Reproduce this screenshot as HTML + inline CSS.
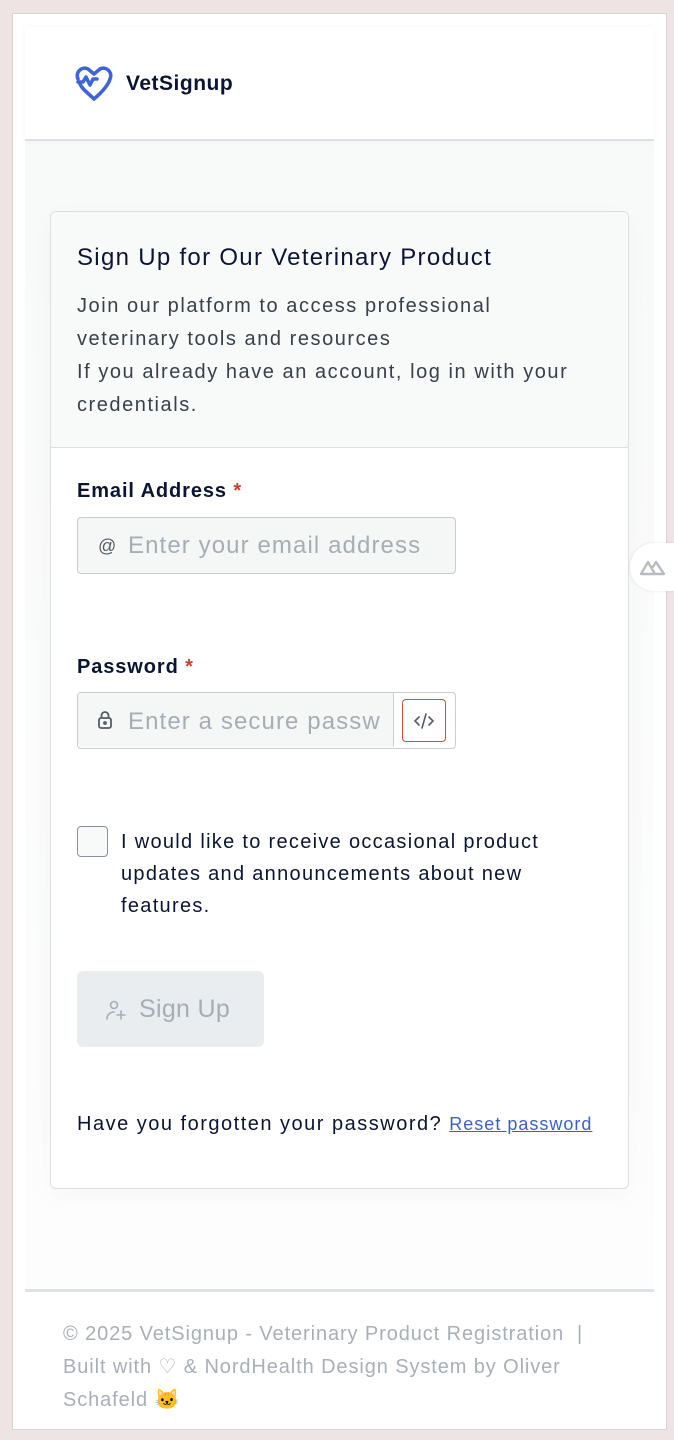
<!DOCTYPE html>
<html><head><meta charset="utf-8"><style>
*{box-sizing:border-box;margin:0;padding:0}
body{width:674px;height:1440px;background:#ede4e3;font-family:"Liberation Sans",sans-serif;position:relative;overflow:hidden;color:#0b1533}
.a{position:absolute}
.frame{left:12px;top:13px;width:655px;height:1417px;background:#fff;border:1px solid #d4d4d8}
.main{left:25px;top:140px;width:629px;height:1150px;background:linear-gradient(#f8f9f9,#fdfdfd)}
.header{left:25px;top:27px;width:629px;height:114px;background:#fff;border-bottom:2px solid #dcdfe3;box-shadow:0 0 6px rgba(0,0,0,.04)}
.card{left:50px;top:211px;width:579px;height:978px;background:#fff;border:1px solid #dcdfe3;border-radius:6px;box-shadow:0 6px 24px rgba(0,0,0,.03)}
.chead{left:0;top:0;width:577px;height:236px;background:#f8f9f9;border-bottom:1px solid #dcdfe3;border-radius:6px 6px 0 0}
.t{white-space:nowrap}
.inp{background:#f5f7f7;border:1.5px solid #c8cdd2;border-radius:4px}
.ph{color:#a6adb4;font-size:24px;letter-spacing:1.1px}
.foot{left:25px;top:1289px;width:629px;height:140px;background:#fff;border-top:3px solid #dde2e7}
.ft{color:#a9afb6;font-size:20px;line-height:33px;left:63px;letter-spacing:0.9px}
</style></head><body>
<div class="a frame"></div>
<div class="a main"></div>
<div class="a header"></div>
<svg class="a" style="left:74px;top:66px" width="40" height="37" viewBox="0 0 40 37" fill="none" stroke="#3f63d8" stroke-width="3.6" stroke-linejoin="round" stroke-linecap="round">
<path d="M4 13C1 6 8 0 14 3l6 5 6-5c6-3 13 3 10 10-2 7-9 14-16 20C14 27 8 23 6 18"/>
<path d="M4 16h5l3-5 4 8 3-6h4"/>
</svg>
<div class="a t" style="left:126px;top:72px;font-size:21px;font-weight:bold;color:#0b1533;letter-spacing:0.5px">VetSignup</div>

<div class="a card">
<div class="a chead"></div>
<div class="a t" style="left:26px;top:32px;font-size:24px;color:#0b1533;letter-spacing:1.3px">Sign Up for Our Veterinary Product</div>
<div class="a t" style="left:26px;top:78px;font-size:20px;line-height:33px;color:#39404a;letter-spacing:1.55px">Join our platform to access professional<br>veterinary tools and resources<br>If you already have an account, log in with your<br>credentials.</div>
<div class="a t" style="left:26px;top:268px;font-size:20px;font-weight:bold;letter-spacing:0.9px">Email Address <span style="color:#c8412a">*</span></div>
<div class="a inp" style="left:26px;top:305px;width:379px;height:57px"></div>
<div class="a t" style="left:47px;top:324px;font-size:18px;color:#555c66">@</div>
<div class="a t ph" style="left:77px;top:320px">Enter your email address</div>
<div class="a t" style="left:26px;top:444px;font-size:20px;font-weight:bold;letter-spacing:0.9px">Password <span style="color:#c8412a">*</span></div>
<div class="a inp" style="left:26px;top:480px;width:379px;height:57px;background:#fff"></div>
<div class="a" style="left:27px;top:481px;width:316px;height:54px;background:#f5f7f7;border-right:1.5px solid #c8cdd2;border-radius:3px 0 0 3px"></div>
<svg class="a" style="left:46px;top:498px" width="16" height="20" viewBox="0 0 16 20" fill="none" stroke="#555c66" stroke-width="1.8"><rect x="2" y="8" width="12" height="10" rx="2"/><path d="M4.5 8V5.5a3.5 3.5 0 0 1 7 0V8"/><circle cx="8" cy="13" r="1" fill="#555c66"/></svg>
<div class="a t ph" style="left:77px;top:496px;width:254px;overflow:hidden">Enter a secure passw</div>
<div class="a" style="left:351px;top:487px;width:44px;height:43px;border:1.5px solid #c8553f;border-radius:4px"></div>
<svg class="a" style="left:362px;top:499px" width="22" height="20" viewBox="0 0 22 20" fill="none" stroke="#555c66" stroke-width="1.6" stroke-linecap="round"><path d="M6 6l-4 4 4 4M16 6l4 4-4 4M13 3L9 17"/></svg>
<div class="a" style="left:26px;top:614px;width:31px;height:31px;border:1.5px solid #8a9199;border-radius:4px;background:#f8f9f9"></div>
<div class="a t" style="left:70px;top:614px;font-size:20px;line-height:32px;color:#0b1533;letter-spacing:1.3px">I would like to receive occasional product<br>updates and announcements about new<br>features.</div>
<div class="a" style="left:26px;top:759px;width:187px;height:76px;background:#e9edf0;border-radius:6px"></div>
<svg class="a" style="left:55px;top:787px" width="22" height="22" viewBox="0 0 22 22" fill="none" stroke="#a6adb4" stroke-width="1.6" stroke-linecap="round"><circle cx="8" cy="6" r="3.5"/><path d="M1 20c0-4 3-7 7-7M15 12v8M11 16h8"/></svg>
<div class="a t" style="left:88px;top:783px;font-size:25px;color:#a6adb4;letter-spacing:0.3px">Sign Up</div>
<div class="a t" style="left:26px;top:901px;font-size:20px;color:#0b1533;letter-spacing:1.5px">Have you forgotten your password? <span style="color:#3f5fc8;text-decoration:underline;font-size:18px;letter-spacing:1px">Reset password</span></div>
</div>

<div class="a" style="left:630px;top:543px;width:44px;height:48px;background:#fff;border-radius:24px 0 0 24px;box-shadow:0 0 3px rgba(0,0,0,.1)"></div>
<svg class="a" style="left:639px;top:558px" width="28" height="18" viewBox="0 0 28 18" fill="none" stroke="#b8bcc0" stroke-width="2.4" stroke-linejoin="round"><path d="M2 16L9 4l7 12zM13 10l4-6 8 12h-9"/></svg>

<div class="a foot"></div>
<div class="a ft t" style="top:1318px">© 2025 VetSignup - Veterinary Product Registration &nbsp;|</div>
<div class="a ft t" style="top:1351px">Built with ♡ &amp; NordHealth Design System by Oliver</div>
<div class="a ft t" style="top:1384px">Schafeld <span style="color:#7d838a">🐱</span></div>
</body></html>
